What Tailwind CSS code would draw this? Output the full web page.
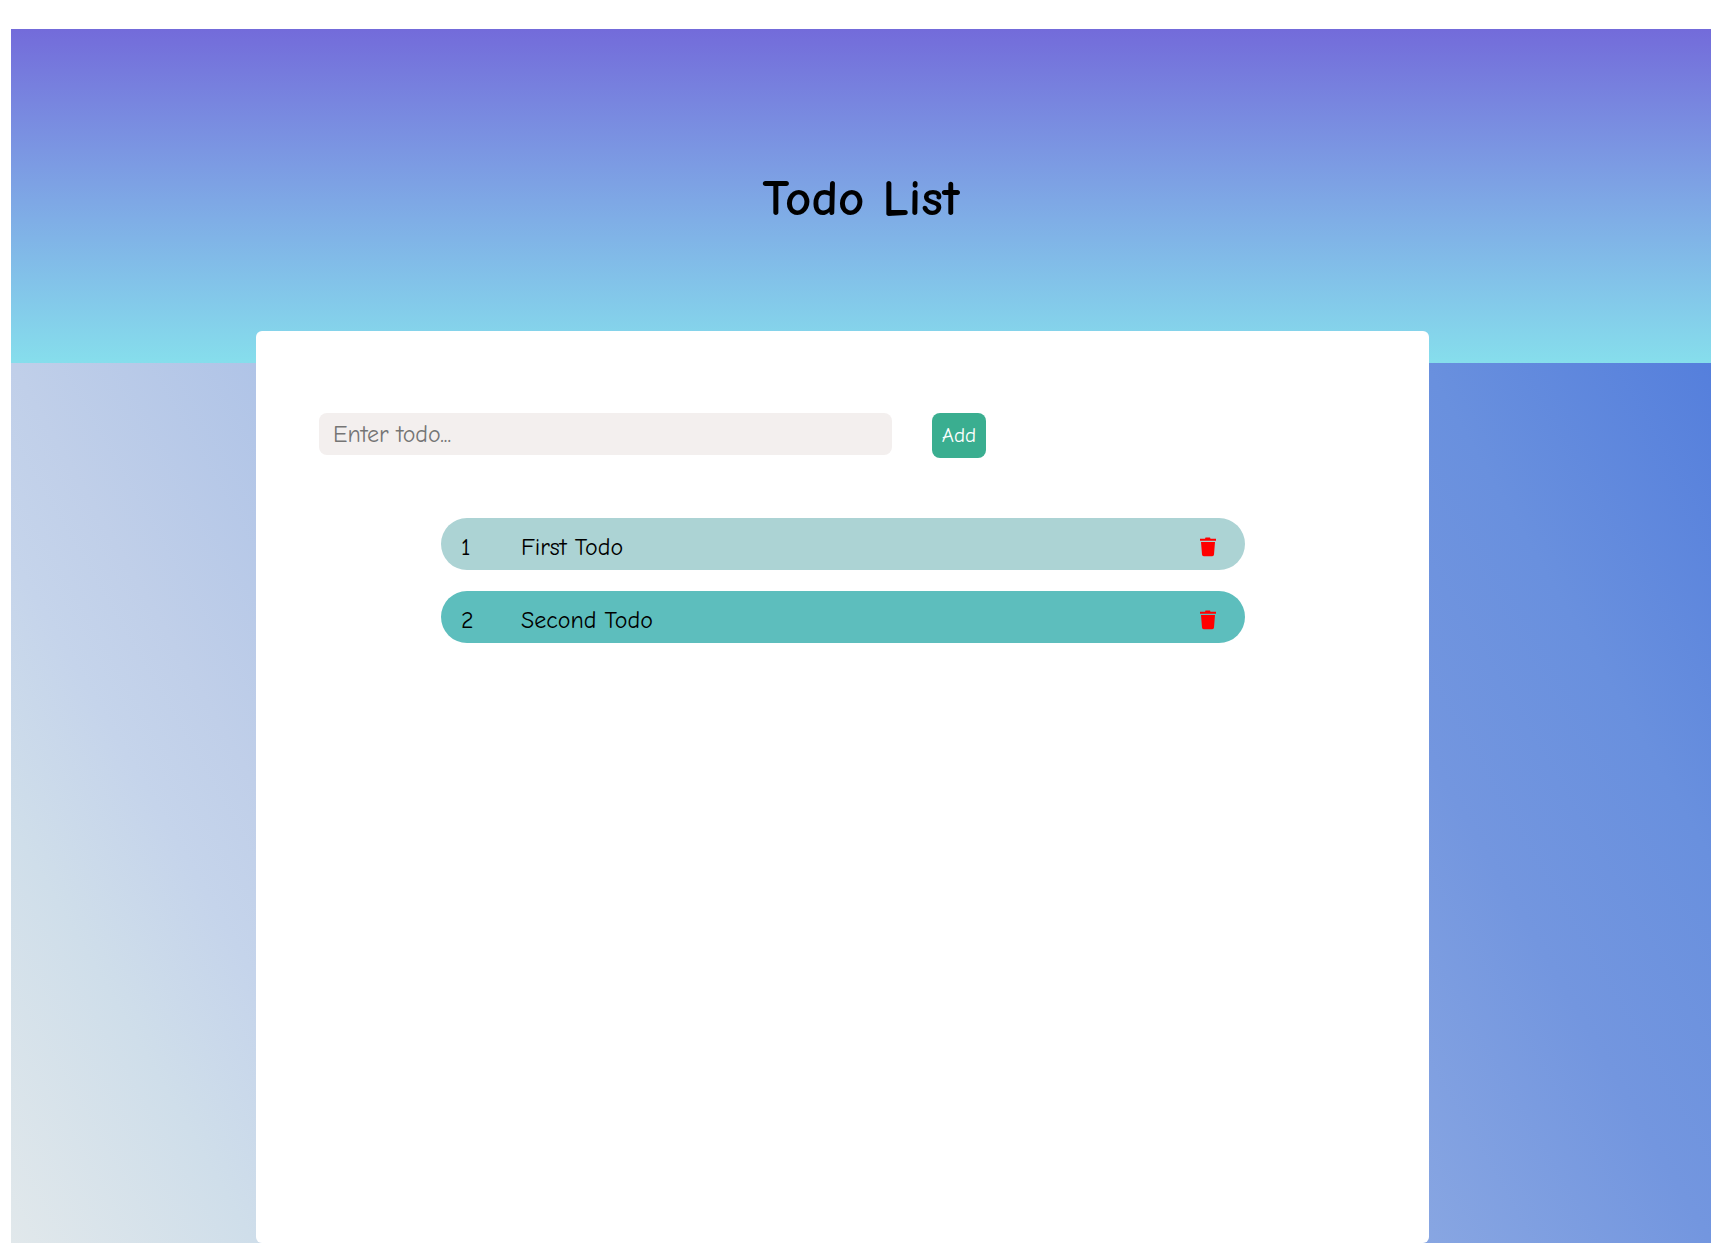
<!DOCTYPE html>
<html lang="en">
<head>
<meta charset="utf-8">
<title>Todo List</title>
<script src="https://cdn.jsdelivr.net/npm/@tailwindcss/browser@4"></script>
</head>
<body class="flex min-h-screen flex-col bg-white px-[11px] pt-[29px] pb-[11px] font-['Comic_Sans_MS','Comic_Neue','Noto_Sans',sans-serif] text-black">
  <header class="flex h-[334px] items-center justify-center bg-linear-to-b from-[#736bda] to-[#86deec] pt-1.5">
    <h1 class="text-[51px] leading-[60px] font-bold">Todo List</h1>
  </header>
  <main class="flex flex-1 flex-col bg-[linear-gradient(60deg,#e1e8eb_0%,#cfdeea_11%,#c5d4eb_18%,#c0cfe9_23%,#b0c4e7_34%,#88a6e2_64%,#7396df_77%,#6990de_87%,#557fdc_100%)] pr-[282px] pl-[245px]">
    <section class="-mt-[32px] flex-1 rounded-md bg-white px-[63px] pt-[82px]">
      <form class="flex items-start gap-[40px]">
        <input type="text" aria-label="Todo" placeholder="Enter todo..." class="h-[42px] w-[573px] rounded-lg bg-[#f3efee] px-[14px] text-[24px] font-medium placeholder:text-[#757575]">
        <button type="button" class="h-[45px] w-[54px] rounded-lg bg-[#3aae90] text-[21px] text-white">Add</button>
      </form>
      <ul class="mt-[60px] mr-[121px] ml-[122px] flex flex-col gap-[21px] text-[24px]">
        <li class="flex h-[52px] items-center rounded-full bg-[#acd3d4] px-[20px] pt-[6px]">
          <span class="w-[60px]">1</span>
          <span class="flex-1">First Todo</span>
          <button type="button" aria-label="Delete First Todo" class="mr-[8px] text-[#ff0000]">
            <svg class="h-[20px] w-[18px]" viewBox="0 0 18 20" fill="currentColor"><path d="M1 1.700h5L6.500.500h4.500l.500 1.200h5.500v2H1zM2 5h14l-1 12.600q-.100 1.700-1.800 1.700H4.800Q3.100 19.300 3 17.600z"/></svg>
          </button>
        </li>
        <li class="flex h-[52px] items-center rounded-full bg-[#5dbebd] px-[20px] pt-[6px]">
          <span class="w-[60px]">2</span>
          <span class="flex-1">Second Todo</span>
          <button type="button" aria-label="Delete Second Todo" class="mr-[8px] text-[#ff0000]">
            <svg class="h-[20px] w-[18px]" viewBox="0 0 18 20" fill="currentColor"><path d="M1 1.700h5L6.500.500h4.500l.500 1.200h5.500v2H1zM2 5h14l-1 12.600q-.100 1.700-1.800 1.700H4.800Q3.100 19.300 3 17.600z"/></svg>
          </button>
        </li>
      </ul>
    </section>
  </main>
</body>
</html>
